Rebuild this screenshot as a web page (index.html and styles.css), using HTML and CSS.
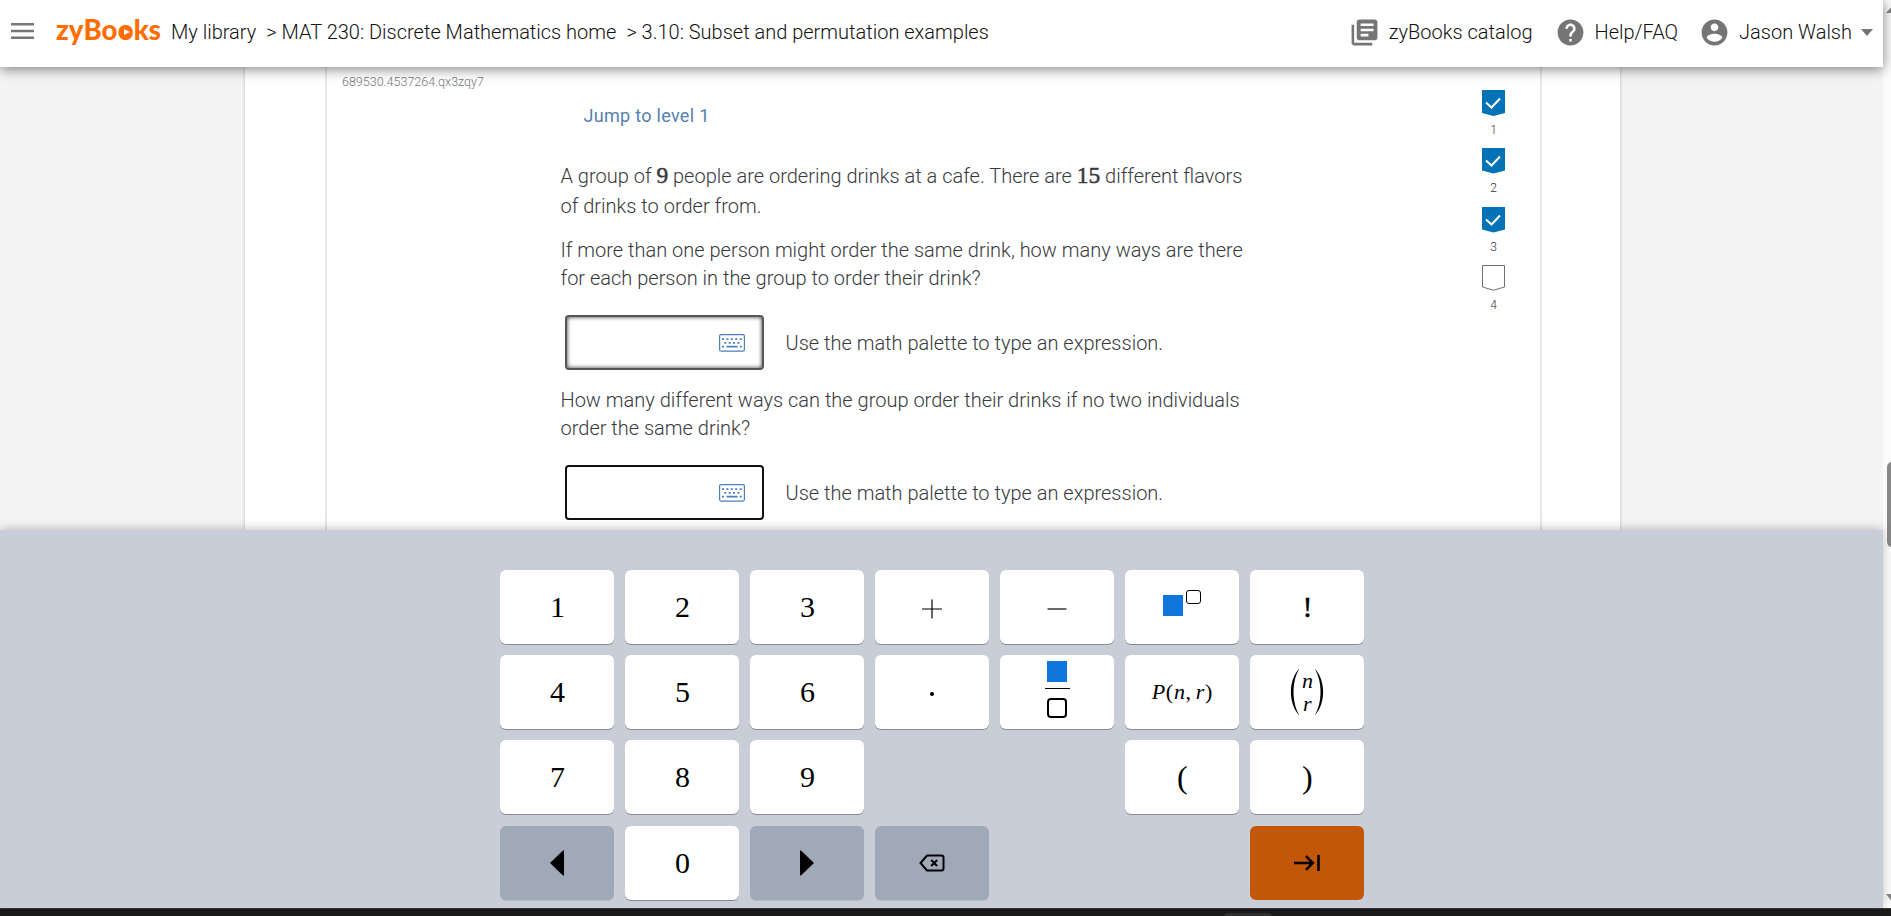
FILE: index.html
```html
<!DOCTYPE html>
<html lang="en">
<head>
  <meta charset="UTF-8">
  <meta name="viewport" content="width=device-width, initial-scale=1.0">
  <title>3.10: Subset and permutation examples</title>
  <link rel="stylesheet" href="styles.css">
</head>
<body>
  <div class="window">
    <div class="page">
      <header>
        <svg class="menu" width="23" height="16" viewBox="0 0 23 16"><path d="M0 1.2h23M0 8h23M0 14.8h23" stroke="#777" stroke-width="2.4"/></svg>
        <span class="logo">zyBo<span class="play">o<i></i></span>ks</span>
        <nav>
          <span class="crumb">My library</span>
          <span class="crumb mat">&gt; MAT 230: Discrete Mathematics home</span>
          <span class="crumb section">&gt; 3.10: Subset and permutation examples</span>
        </nav>
        <div class="links">
          <div class="link catalog">
            <svg viewBox="0 0 24 24"><path d="M4 6H2v14c0 1.1.9 2 2 2h14v-2H4V6zm16-4H8c-1.100 0-2 .9-2 2v12c0 1.100.9 2 2 2h12c1.100 0 2-.9 2-2V4c0-1.100-.9-2-2-2zm-1 9H9V9h10v2zm-4 4H9v-2h6v2zm4-8H9V5h10v2z"/></svg>
            <span>zyBooks catalog</span>
          </div>
          <div class="link help">
            <svg viewBox="0 0 24 24"><path d="M12 2C6.480 2 2 6.480 2 12s4.480 10 10 10 10-4.480 10-10S17.520 2 12 2zm1 17h-2v-2h2v2zm2.070-7.750l-.9.920C13.450 12.900 13 13.500 13 15h-2v-.5c0-1.100.45-2.100 1.170-2.830l1.240-1.260c.37-.36.590-.86.590-1.410 0-1.100-.9-2-2-2s-2 .9-2 2H8c0-2.210 1.790-4 4-4s4 1.790 4 4c0 .88-.36 1.680-.93 2.250z"/></svg>
            <span>Help/FAQ</span>
          </div>
          <div class="link user">
            <svg viewBox="0 0 24 24"><path d="M12 2C6.480 2 2 6.480 2 12s4.480 10 10 10 10-4.480 10-10S17.520 2 12 2zm0 3c1.660 0 3 1.340 3 3s-1.340 3-3 3-3-1.340-3-3 1.340-3 3-3zm0 14.200c-2.500 0-4.710-1.280-6-3.220.03-1.990 4-3.080 6-3.080 1.990 0 5.970 1.090 6 3.080-1.290 1.940-3.500 3.220-6 3.220z"/></svg>
            <span>Jason Walsh</span>
            <i class="caret"></i>
          </div>
        </div>
      </header>
      <main>
        <div class="chapter">
          <div class="activity">
            <div class="activity-id">689530.4537264.qx3zqy7</div>
            <div class="question">
              <a class="jump">Jump to level 1</a>
              <p class="first">A group of <b>9</b> people are ordering drinks at a cafe. There are <b>15</b> different flavors<br>of drinks to order from.</p>
              <p>If more than one person might order the same drink, how many ways are there<br>for each person in the group to order their drink?</p>
              <div class="answer">
                <div class="field focused">
                  <svg width="26" height="18" viewBox="0 0 26 18"><rect x=".6" y=".6" width="24.800" height="16.500" rx="1.500"/><path d="M3 5.200h2m2.400 0h2m2.400 0h2m2.400 0h2m2.600 0h2M5.200 8.900h2m2.400 0h2m2.400 0h2m2.400 0h2M3 12.600h2m2.600 0h11m2.200 0h2"/></svg>
                </div>
                <span>Use the math palette to type an expression.</span>
              </div>
              <p class="second">How many different ways can the group order their drinks if no two individuals<br>order the same drink?</p>
              <div class="answer">
                <div class="field">
                  <svg width="26" height="18" viewBox="0 0 26 18"><rect x=".6" y=".6" width="24.800" height="16.500" rx="1.500"/><path d="M3 5.200h2m2.400 0h2m2.400 0h2m2.400 0h2m2.600 0h2M5.200 8.900h2m2.400 0h2m2.400 0h2m2.400 0h2M3 12.600h2m2.600 0h11m2.200 0h2"/></svg>
                </div>
                <span>Use the math palette to type an expression.</span>
              </div>
            </div>
            <ul class="levels">
              <li><svg class="done" viewBox="0 0 23 26"><path class="flag" d="M0 0h23v23l-11.500 3L0 23z"/><path class="tick" d="M4 12.500l5.500 5L18 8.500"/></svg>1</li>
              <li><svg class="done" viewBox="0 0 23 26"><path class="flag" d="M0 0h23v22.500l-11.500 3L0 22.500z"/><path class="tick" d="M4 12.500l5.500 5L18 8.500"/></svg>2</li>
              <li><svg class="done" viewBox="0 0 23 26"><path class="flag" d="M0 0h23v22.500l-11.500 3L0 22.500z"/><path class="tick" d="M4 12.500l5.500 5L18 8.500"/></svg>3</li>
              <li><svg viewBox="0 0 23 26"><path class="open" d="M.5.5h22V22l-11 3.200L.5 22z"/></svg>4</li>
            </ul>
          </div>
        </div>
      </main>
      <section class="palette">
        <div class="keys">
          <div class="key">1</div>
          <div class="key">2</div>
          <div class="key">3</div>
          <div class="key sign"><svg width="20" height="20" viewBox="0 0 20 20"><path d="M0 10h20M10 .5v19" stroke="#000" stroke-width="1.200"/></svg></div>
          <div class="key sign"><svg width="20" height="20" viewBox="0 0 20 20"><path d="M.5 10h19" stroke="#000" stroke-width="1.200"/></svg></div>
          <div class="key power"><i class="full"></i><i class="empty"></i></div>
          <div class="key bang">!</div>

          <div class="key">4</div>
          <div class="key">5</div>
          <div class="key">6</div>
          <div class="key sign"><i class="dot"></i></div>
          <div class="key fraction"><i class="full"></i><i class="bar"></i><i class="empty"></i></div>
          <div class="key perm"><em>P</em>(<em>n</em>,<em class="r">r</em>)</div>
          <div class="key choose">
            <svg width="10" height="48" viewBox="0 0 10 48"><path d="M9.500.5C-2 12-2 36 9.500 47.500 1.500 35 1.500 13 9.500.5z"/></svg>
            <div class="stack"><em>n</em><em>r</em></div>
            <svg width="10" height="48" viewBox="0 0 10 48"><path d="M.5.5c11.500 11.500 11.500 35.500 0 47 8-12.500 8-34.500 0-47z"/></svg>
          </div>

          <div class="key">7</div>
          <div class="key">8</div>
          <div class="key">9</div>
          <div class="key paren open-paren">(</div>
          <div class="key paren">)</div>

          <div class="key grey"><svg width="14" height="26" viewBox="0 0 14 26"><path d="M14 .5v25h-1L0 13 13 .5z"/></svg></div>
          <div class="key">0</div>
          <div class="key grey"><svg width="14" height="26" viewBox="0 0 14 26"><path d="M0 .5v25h1L14 13 1 .5z"/></svg></div>
          <div class="key grey"><svg width="26" height="18" viewBox="0 0 26 18"><path d="M8 1.500h14.500q2 0 2 2v11q0 2-2 2H8L1.500 9zM12.200 6l6 6m0-6l-6 6" fill="none" stroke="#000" stroke-width="2"/></svg></div>
          <div class="key orange"><svg width="26" height="18" viewBox="0 0 26 18"><path d="M0 9h18M12 2.200L18.800 9 12 15.800M24.500 1v16" fill="none" stroke="#000" stroke-width="2.500"/></svg></div>
        </div>
      </section>
    </div>
    <div class="scrollbar">
      <i class="up"></i>
      <i class="thumb"></i>
      <i class="down"></i>
    </div>
  </div>
  <footer><i></i></footer>
</body>
</html>
```
FILE: styles.css
```css
* {
  margin: 0;
  padding: 0;
  box-sizing: border-box;
}
body {
  height: 100vh;
  overflow: hidden;
  display: flex;
  flex-direction: column;
  font-family: Roboto, sans-serif;
  font-weight: 300;
  font-size: 20px;
  color: #37393b;
  background-color: white;
}
ul {list-style-type: none;}
svg {display: block;}
i {display: block;}
.window {
  display: flex;
  height: 908px;
}
.page {
  width: 1883px;
  display: flex;
  flex-direction: column;
}

/* top bar */
header {
  height: 67px;
  flex: none;
  display: flex;
  align-items: center;
  padding: 0 10px 3px 11px;
  color: #111;
  background-color: white;
  box-shadow: 0 2px 12px rgba(0, 0, 0, 0.5);
  position: relative;
  z-index: 2;
  white-space: nowrap;
}
.menu {margin-top: -3px;}
.logo {
  width: 115px;
  margin: -4px 0 0 22px;
  font-family: Lato, sans-serif;
  font-weight: 900;
  font-size: 27.5px;
  letter-spacing: 0.150px;
  line-height: 34px;
  color: #ff6c00;
}
.play {position: relative;}
/* the second o has a play sign for its hole */
.play i {
  position: absolute;
  left: 3px;
  top: 14px;
  width: 10px;
  height: 11px;
  border-radius: 50%;
  background-color: #ff6c00;
}
.play i::after {
  content: "";
  position: absolute;
  left: 3px;
  top: 2px;
  border-left: 6px solid white;
  border-top: 3.5px solid transparent;
  border-bottom: 3.5px solid transparent;
}
nav {
  display: flex;
}
.mat {margin-left: 10px;}
.section {margin-left: 10px;}
.links {
  margin-left: auto;
  display: flex;
  align-items: center;
}
.link {
  display: flex;
  align-items: center;
}
.link svg {
  width: 31px;
  height: 31px;
  fill: #757575;
  margin-right: 9px;
}
.help, .user {margin-left: 22px;}
.user svg {margin: 0 9px 0 -1px;}
.caret {
  margin-left: 9px;
  border-top: 7px solid #757575;
  border-left: 6px solid transparent;
  border-right: 6px solid transparent;
}

/* content */
main {
  height: 463px;
  flex: none;
  overflow: hidden;
  background-color: #f4f4f4;
}
.chapter {
  width: 1375px;
  height: 463px;
  margin-left: 245px;
  padding: 0 78px 0 80px;
  background-color: white;
  box-shadow: 0 0 3px rgba(0, 0, 0, 0.25);
}
.activity {
  height: 463px;
  display: flex;
  border-left: 2px solid #e8e8e8;
  border-right: 2px solid #e8e8e8;
}
.activity-id {
  width: 233.5px;
  padding: 7px 0 0 15px;
  font-size: 12.5px;
  line-height: 16px;
  color: #777;
}
.question {
  width: 700px;
  line-height: 28px;
  white-space: nowrap;
}
.jump {
  display: block;
  margin: 35px 0 0 23px;
  font-weight: 400;
  font-size: 18px;
  letter-spacing: 0.300px;
  color: #5580b0;
}
.question p.first {
  margin-top: 31px;
  line-height: 30px;
}
.question p {margin-top: 15px;}
.question p.second {margin-top: 16px;}
.question b {
  font-family: "Liberation Serif", serif;
  font-weight: 400;
  font-size: 23.5px;
  line-height: 20px;
  -webkit-text-stroke: 0.500px #37393b;
}
.answer {
  display: flex;
  align-items: center;
  margin: 23px 0 0 4px;
}
.field {
  width: 199px;
  height: 55px;
  margin-right: 22px;
  padding-right: 17px;
  display: flex;
  align-items: center;
  justify-content: flex-end;
  border: 2px solid #111;
  border-radius: 4px;
}
.focused {
  border-color: #555;
  box-shadow: inset 0 0 4px #333;
}
.field svg {
  fill: none;
  stroke: #4b80bd;
}
.field rect {stroke-width: 1.200;}
.field path {stroke-width: 1.800;}
.levels {
  width: 23px;
  margin: 23px 0 0 221.5px;
}
.levels li {
  height: 58.3px;
  font-size: 12px;
  line-height: 29px;
  text-align: center;
  color: #333;
}
.levels svg {
  width: 23px;
  height: 26px;
}
.flag {fill: #0072b5;}
.tick {
  fill: none;
  stroke: white;
  stroke-width: 2;
}
.open {
  fill: none;
  stroke: #707070;
}

/* math palette */
.palette {
  height: 378px;
  padding: 40.3px 0 0 500.4px;
  background-color: #c9cdd7;
  box-shadow: 0 -1px 10px rgba(0, 0, 0, 0.25);
  position: relative;
}
.keys {
  display: grid;
  grid-template-columns: repeat(7, 114px);
  grid-auto-rows: 74px;
  gap: 11.1px 11px;
}
.key {
  display: flex;
  align-items: center;
  justify-content: center;
  font-family: "Liberation Serif", serif;
  font-weight: 400;
  font-size: 30px;
  line-height: 30px;
  color: black;
  background-color: white;
  border-radius: 6px;
  box-shadow: 0 1px 0 #898c91;
}
.sign {padding-top: 4px;}
.bang {-webkit-text-stroke: 0.400px black;}
.grey {
  background-color: #a0a9b8;
  box-shadow: 0 1px 0 #b5bbc6;
}
.orange {
  grid-column: 7;
  background-color: #c25609;
  box-shadow: none;
}
.paren {font-size: 32px;}
.open-paren {grid-column: 6;}
.full {
  width: 20px;
  height: 21px;
  background-color: #0e76dc;
}
.empty {
  width: 20px;
  height: 20px;
  border: 2px solid black;
  border-radius: 4px;
}
.power {padding-right: 1px;}
.power .full {margin-top: -3px;}
.power .empty {
  width: 15px;
  height: 14px;
  margin: -20px 0 0 3px;
  border-width: 1px;
  border-radius: 3px;
}
.dot {
  width: 4px;
  height: 4px;
  border-radius: 50%;
  background-color: black;
}
.fraction {
  flex-direction: column;
  padding-bottom: 6px;
}
.bar {
  width: 25px;
  height: 1px;
  margin: 6px 0 9px;
  background-color: black;
}
.perm {
  font-size: 22px;
  letter-spacing: 0.700px;
}
.perm .r {margin-left: 4px;}
.choose svg {fill: black;}
.stack {
  width: 14px;
  display: flex;
  flex-direction: column;
  align-items: center;
  font-size: 22px;
  line-height: 23px;
}

/* window edges */
.scrollbar {
  width: 8px;
  overflow: hidden;
  background-color: #fcfcfc;
}
.scrollbar i {margin-left: 3px;}
.up {
  width: 14px;
  margin-top: 5px;
  border-bottom: 8px solid #888;
  border-left: 7px solid transparent;
  border-right: 7px solid transparent;
}
.scrollbar .thumb {
  width: 10px;
  height: 85px;
  margin: 449px 0 0 4px;
  border-radius: 5px;
  background-color: #888;
}
.down {
  width: 14px;
  margin-top: 347px;
  border-top: 9px solid #888;
  border-left: 7px solid transparent;
  border-right: 7px solid transparent;
}
footer {
  height: 8px;
  overflow: hidden;
  background-color: #1b1b1b;
  border-top: 1px solid #37383c;
}
footer i {
  width: 48px;
  height: 10px;
  margin: 4px 0 0 1224px;
  border-radius: 4px;
  background-color: #303030;
}
```
